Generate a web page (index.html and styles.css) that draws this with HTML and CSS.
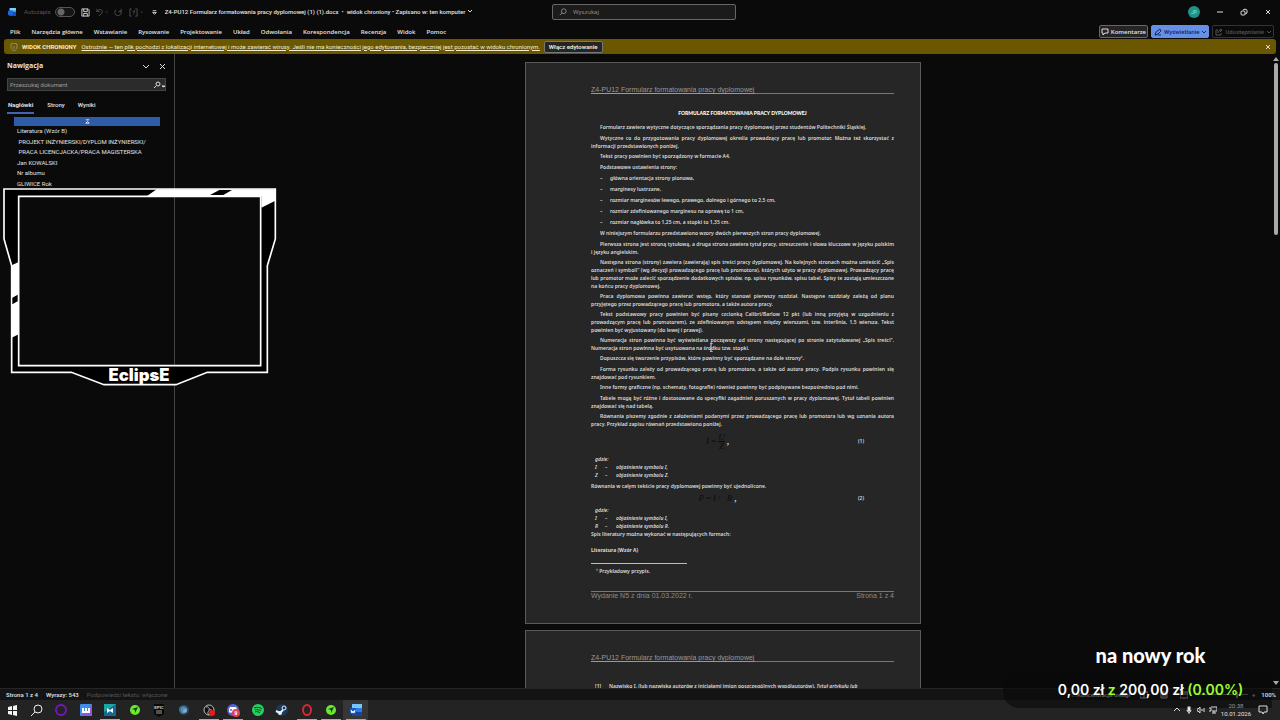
FILE: index.html
```html
<!DOCTYPE html>
<html lang="pl">
<head>
    <meta charset="UTF-8">
    <meta name="viewport" content="width=device-width, initial-scale=1.0">
    <title>Z4-PU12 Formularz formatowania pracy dyplomowej</title>
    <link rel="stylesheet" href="styles.css">
</head>
<body>
<div class="app">
    <header class="titlebar">
        <svg class="logo" viewBox="0 0 10 10"><rect x="2" y="0" width="8" height="10" rx="1" fill="#2f9be8"/><rect x="2" y="5" width="8" height="5" fill="#174fb5"/><rect x="2" y="0" width="8" height="3" rx="1" fill="#7bd3f5"/><rect y="3" width="6" height="6" rx="1" fill="#1c64d8"/></svg>
        <label class="autosave">Autozapis <input type="checkbox" disabled></label>
        <button class="icon" aria-label="Zapisz"><svg viewBox="0 0 10 10"><path d="M1 1h7l1 1v7H1zM3 1v3h4V1M3 9V6h4v3"/></svg></button>
        <button class="icon off" aria-label="Cofnij"><svg viewBox="0 0 14 10"><path d="M1 1v3h3M1 4c2-3 6-3 6 0 0 2-2 3-4 5M11 4l1 1 1-1"/></svg></button>
        <button class="icon off" aria-label="Ponów"><svg viewBox="0 0 10 10"><path d="M8 1v3H5M2 2c-3 4 1 8 4 6 2-1 3-3 1-5"/></svg></button>
        <button class="icon off" aria-label="Nawiasy"><svg viewBox="0 0 16 10"><path d="M3 1H1v8h2M7 1h2v8H7M4 4l2-1v2L5 6v1M13 4l1 1 1-1"/></svg></button>
        <button class="icon" aria-label="Dostosuj"><svg viewBox="0 0 10 10"><path d="M3 3h4M3 5h4L5 7z"/></svg></button>
        <h1>Z4-PU12 Formularz formatowania pracy dyplomowej (1) (1).docx &nbsp;•&nbsp; widok chroniony • Zapisano w: ten komputer <svg viewBox="0 0 6 6"><path d="M1 2l2 2 2-2"/></svg></h1>
        <label class="search">
            <svg viewBox="0 0 10 10"><circle cx="6" cy="4" r="3"/><path d="M4 6L1 9"/></svg>
            <input type="text" placeholder="Wyszukaj" aria-label="Wyszukaj">
        </label>
        <div class="window">
            <span class="avatar">JP</span>
            <button aria-label="Minimalizuj"><svg viewBox="0 0 8 8"><path d="M1 4h6"/></svg></button>
            <button aria-label="Przywróć"><svg viewBox="0 0 8 8"><rect x="1" y="3" width="4" height="4" rx="1"/><path d="M3 2c0-1 4-1 4 0v3L5 6"/></svg></button>
            <button aria-label="Zamknij"><svg viewBox="0 0 8 8"><path d="M2 2l4 4M6 2L2 6"/></svg></button>
        </div>
    </header>

    <nav class="ribbon">
        <ul>
            <li><a href="#">Plik</a></li>
            <li><a href="#">Narzędzia główne</a></li>
            <li><a href="#">Wstawianie</a></li>
            <li><a href="#">Rysowanie</a></li>
            <li><a href="#">Projektowanie</a></li>
            <li><a href="#">Układ</a></li>
            <li><a href="#">Odwołania</a></li>
            <li><a href="#">Korespondencja</a></li>
            <li><a href="#">Recenzja</a></li>
            <li><a href="#">Widok</a></li>
            <li><a href="#">Pomoc</a></li>
        </ul>
        <div class="actions">
            <button class="comments"><svg viewBox="0 0 8 8"><path d="M1 1h6v4H4L2 7V5H1z"/></svg>Komentarze</button>
            <button class="viewing"><svg viewBox="0 0 8 8"><path d="M1 7l1-3 4-3 1 2-3 3zM4 7h3M1 7h1"/></svg>Wyświetlanie<svg class="caret" viewBox="0 0 4 4"><path d="M0 1l2 2 2-2"/></svg></button>
            <button class="share"><svg viewBox="0 0 8 8"><path d="M3 2H1v5h5V5M3 5c0-2 1-3 4-3M5 1l2 1-2 2"/></svg>Udostępnianie<svg class="caret" viewBox="0 0 4 4"><path d="M0 1l2 2 2-2"/></svg></button>
        </div>
    </nav>

    <div class="warning">
        <svg class="shield" viewBox="0 0 8 8"><path d="M4 0l3 1v3c0 2-1 3-3 4-2-1-3-2-3-4V1zM4 3v3M4 2v0"/></svg>
        <strong>WIDOK CHRONIONY</strong>
        <a href="#">Ostrożnie — ten plik pochodzi z lokalizacji internetowej i może zawierać wirusy. Jeśli nie ma konieczności jego edytowania, bezpieczniej jest pozostać w widoku chronionym.</a>
        <button class="enable">Włącz edytowanie</button>
        <button class="close" aria-label="Zamknij"><svg viewBox="0 0 8 8"><path d="M2 2l4 4M6 2L2 6"/></svg></button>
    </div>

    <main>
        <aside class="panel">
            <div class="panel-head">
                <h2>Nawigacja</h2>
                <button aria-label="Opcje"><svg viewBox="0 0 8 8"><path d="M1 3l3 3 3-3"/></svg></button>
                <button aria-label="Zamknij"><svg viewBox="0 0 8 8"><path d="M2 2l5 5M7 2L2 7"/></svg></button>
            </div>
            <div class="find">
                <input type="text" placeholder="Przeszukaj dokument" aria-label="Przeszukaj dokument">
                <button aria-label="Szukaj"><svg viewBox="0 0 12 8"><circle cx="5" cy="3" r="2"/><path d="M3 5L1 7M9 5h3l-1 1z"/></svg></button>
            </div>
            <div class="tabs">
                <a href="#" class="active">Nagłówki</a>
                <a href="#">Strony</a>
                <a href="#">Wyniki</a>
            </div>
            <button class="to-top" aria-label="Początek"><svg viewBox="0 0 6 6"><path d="M1 1h4M1 5l2-2 2 2z"/></svg></button>
            <ul class="headings">
                <li>Literatura (Wzór B)</li>
                <li>&nbsp;PROJEKT INŻYNIERSKI/DYPLOM INŻYNIERSKI/</li>
                <li>&nbsp;PRACA LICENCJACKA/PRACA MAGISTERSKA</li>
                <li>Jan KOWALSKI</li>
                <li>Nr albumu</li>
                <li>GLIWICE Rok</li>
            </ul>
        </aside>

        <div class="document">
            <article class="page">
                <div class="page-header"><span>Z4-PU12 Formularz formatowania pracy dyplomowej</span></div>
                <h3>FORMULARZ FORMATOWANIA PRACY DYPLOMOWEJ</h3>
                <p>Formularz zawiera wytyczne dotyczące sporządzania pracy dyplomowej przez studentów Politechniki Śląskiej.</p>
                <p class="long">Wytyczne co do przygotowania pracy dyplomowej określa prowadzący pracę lub promotor. Można też skorzystać z informacji przedstawionych poniżej.</p>
                <p>Tekst pracy powinien być sporządzony w formacie A4.</p>
                <p>Podstawowe ustawienia strony:</p>
                <ul>
                    <li>główna orientacja strony pionowa,</li>
                    <li>marginesy lustrzane,</li>
                    <li>rozmiar marginesów lewego, prawego, dolnego i górnego to 2,5 cm,</li>
                    <li>rozmiar zdefiniowanego marginesu na oprawę to 1 cm,</li>
                    <li>rozmiar nagłówka to 1,25 cm, a stopki to 1,35 cm.</li>
                </ul>
                <p>W niniejszym formularzu przedstawiono wzory dwóch pierwszych stron pracy dyplomowej.</p>
                <p class="long">Pierwsza strona jest stroną tytułową, a druga strona zawiera tytuł pracy, streszczenie i słowa kluczowe w języku polskim i&nbsp;języku angielskim.</p>
                <p class="long">Następna strona (strony) zawiera (zawierają) spis treści pracy dyplomowej. Na kolejnych stronach można umieścić „Spis oznaczeń i symboli” (wg decyzji prowadzącego pracę lub promotora), których użyto w pracy dyplomowej. Prowadzący pracę lub&nbsp;promotor może zalecić sporządzenie dodatkowych spisów, np. spisu rysunków, spisu tabel. Spisy te zostają umieszczone na&nbsp;końcu pracy dyplomowej.</p>
                <p class="long">Praca dyplomowa powinna zawierać wstęp, który stanowi pierwszy rozdział. Następne rozdziały zależą od planu przyjętego przez&nbsp;prowadzącego pracę lub promotora, a także autora pracy.</p>
                <p class="long">Tekst podstawowy pracy powinien być pisany czcionką Calibri/Barlow 12 pkt (lub inną przyjętą w uzgodnieniu z prowadzącym pracę lub promotorem), ze zdefiniowanym odstępem między wierszami, tzw. interlinia, 1,5 wiersza. Tekst powinien być wyjustowany (do lewej i prawej).</p>
                <p class="long">Numeracja stron powinna być wyświetlana począwszy od strony następującej po stronie zatytułowanej „Spis treści”. Numeracja stron powinna być usytuowana na środku tzw. stopki.</p>
                <p>Dopuszcza się tworzenie przypisów, które powinny być sporządzane na dole strony¹.</p>
                <p class="long">Forma rysunku zależy od prowadzącego pracę lub promotora, a także od autora pracy. Podpis rysunku powinien się znajdować pod rysunkiem.</p>
                <p>Inne formy graficzne (np. schematy, fotografie) również powinny być podpisywane bezpośrednio pod nimi.</p>
                <p class="long">Tabele mogą być różne i dostosowane do specyfiki zagadnień poruszanych w pracy dyplomowej. Tytuł tabeli powinien znajdować się nad tabelą.</p>
                <p class="long">Równania piszemy zgodnie z założeniami podanymi przez prowadzącego pracę lub promotora lub wg uznania autora pracy. Przykład zapisu równań przedstawiono poniżej.</p>
                <div class="equation">
                    <div class="formula"><i>I</i> = <span class="fraction"><i>U</i><i>Z</i></span><b>,</b></div>
                    <span>(1)</span>
                </div>
                <dl>
                    <dt>gdzie:</dt>
                    <dd><span>I</span><span>–</span>objaśnienie symbolu I,</dd>
                    <dd><span>Z</span><span>–</span>objaśnienie symbolu Z.</dd>
                </dl>
                <p class="flush">Równania w całym tekście pracy dyplomowej powinny być ujednolicone.</p>
                <div class="equation second">
                    <div class="formula"><i>P</i> = <i>I</i><sup>2</sup> &nbsp;<i>R</i><b>,</b></div>
                    <span>(2)</span>
                </div>
                <dl class="second">
                    <dt>gdzie:</dt>
                    <dd><span>I</span><span>–</span>objaśnienie symbolu I,</dd>
                    <dd><span>R</span><span>–</span>objaśnienie symbolu R.</dd>
                </dl>
                <p class="flush last">Spis literatury można wykonać w następujących formach:</p>
                <h4>Literatura (Wzór A)</h4>
                <div class="footnote">¹ Przykładowy przypis.</div>
                <footer><span>Wydanie N5 z dnia 01.03.2022 r.</span><span>Strona 1 z 4</span></footer>
            </article>
            <article class="page">
                <div class="page-header"><span>Z4-PU12 Formularz formatowania pracy dyplomowej</span></div>
                <div class="reference"><span>[1]</span><div>Nazwisko I. (lub nazwiska autorów z inicjałami imion poszczególnych współautorów), <i>Tytuł artykułu lub</i></div></div>
            </article>
        </div>

        <div class="scrollbar">
            <svg viewBox="0 0 6 4"><path d="M3 0l3 4H0z"/></svg>
            <div class="track"><div class="thumb"></div></div>
            <svg viewBox="0 0 6 4"><path d="M0 0h6L3 4z"/></svg>
        </div>
    </main>

    <div class="status">
        <span>Strona 1 z 4</span>
        <span>Wyrazy: 543</span>
        <span class="hint">Podpowiedzi tekstu: włączone</span>
        <div class="view">
            <span>⛶ Koncentracja uwagi</span>
            <svg viewBox="0 0 8 8"><path d="M0 1h8v6H0zM4 1v6"/></svg>
            <svg viewBox="0 0 8 8"><path d="M1 1h6v6H1zM2 3h4M2 5h4"/></svg>
            <svg viewBox="0 0 8 8"><path d="M0 1h8v6H0zM0 3h8"/></svg>
            <input type="range" value="80" aria-label="Powiększenie">
            <span class="plus">+</span>
            <span class="zoom">100%</span>
        </div>
    </div>

    <div class="taskbar">
        <div class="apps">
            <button aria-label="Start"><svg viewBox="0 0 14 14"><path fill="#f4f4f4" d="M3 4l4-1v4H3zM8 3l4-1v5H8zM3 8h4v4l-4-1zM8 8h4v5l-4-1z"/></svg></button>
            <button aria-label="Szukaj"><svg viewBox="0 0 14 14"><circle cx="8" cy="6" r="4" fill="none" stroke="#eee"/><path d="M5 9l-4 4" stroke="#eee"/></svg></button>
            <button aria-label="Opera GX"><svg viewBox="0 0 14 14"><circle cx="7" cy="7" r="5" fill="none" stroke="#7417b8" stroke-width="2"/></svg></button>
            <button aria-label="Wattpad"><svg viewBox="0 0 14 14"><rect x="1" y="1" width="12" height="12" rx="1" fill="#3d8fe8"/><path d="M1 13L13 1v12z" fill="#8a5ae0"/><path d="M4 5v4h6V5M7 5v4" fill="none" stroke="#fff" stroke-width="2"/></svg></button>
            <button class="open" aria-label="Medal"><svg viewBox="0 0 14 14"><rect x="1" y="1" width="12" height="12" fill="#136a96"/><path d="M1 1h12L1 9z" fill="#1ba6a1"/><path d="M4 5l3 2 3-2v5L7 8l-3 2z" fill="#fff"/></svg></button>
            <button aria-label="Nawigator"><svg viewBox="0 0 14 14"><circle cx="7" cy="7" r="5" fill="#6ae834"/><path d="M4 6l6-2-3 6V7z" fill="#193d14"/></svg></button>
            <button aria-label="Epic Games"><svg viewBox="0 0 14 14"><path d="M2 1h10v10l-5 3-5-3z" fill="#080808"/><text x="7" y="6" class="epic">EPIC</text><path d="M4 8h6M4 10h6" stroke="#999"/></svg></button>
            <button aria-label="Przeglądarka"><svg viewBox="0 0 14 14"><circle cx="7" cy="7" r="5" fill="#264c6b"/><circle cx="7" cy="7" r="3" fill="#8caec5"/><path d="M2 5c3-4 7-2 9 2-4-2-6 0-4 4-3 0-5-2-5-6" fill="#4281ab" opacity=".7"/></svg></button>
            <button class="open" aria-label="OBS"><svg viewBox="0 0 14 14"><circle cx="7" cy="7" r="5" fill="#111" stroke="#bbb"/><path d="M4 4c4-1 3 4 6 3M7 12c-3-3 1-4 0-6" fill="none" stroke="#bbb"/><circle cx="10" cy="10" r="3" fill="#ee1818"/></svg></button>
            <button class="open" aria-label="Discord"><svg viewBox="0 0 14 14"><circle cx="7" cy="7" r="6" fill="#5961d0"/><path d="M3 9c0-6 1-5 4-5s4-1 4 5L9 10 8 9H6l-1 1z" fill="#fff"/><circle cx="5" cy="7" r="1" fill="#5961d0"/><circle cx="10" cy="10" r="4" fill="#df4052"/><text x="10" y="12" class="badge">9</text></svg></button>
            <button aria-label="Spotify"><svg viewBox="0 0 14 14"><circle cx="7" cy="7" r="6" fill="#24d160"/><path d="M3 5c3-1 6-1 8 1M4 7c2-1 5 0 6 1M4 9c2-1 4 0 5 1" fill="none" stroke="#123b20"/></svg></button>
            <button aria-label="Steam"><svg viewBox="0 0 14 14"><circle cx="7" cy="7" r="6" fill="#173a5c"/><circle cx="9" cy="5" r="2" fill="none" stroke="#eee"/><path d="M1 8l4 2 3-3" fill="none" stroke="#eee" stroke-width="2"/><circle cx="5" cy="10" r="2" fill="#eee"/></svg></button>
            <button class="open" aria-label="Opera"><svg viewBox="0 0 14 14"><ellipse cx="7" cy="7" rx="4" ry="5" fill="none" stroke="#d52938" stroke-width="2"/></svg></button>
            <button class="open" aria-label="Nawigator"><svg viewBox="0 0 14 14"><circle cx="7" cy="7" r="5" fill="#6ae834"/><path d="M4 6l6-2-3 6V7z" fill="#193d14"/></svg></button>
            <button class="open current" aria-label="Word"><svg viewBox="0 0 14 14"><rect x="3" y="1" width="10" height="12" rx="1" fill="#2d7be3"/><path d="M3 1h10v4H3z" fill="#75c5f7"/><path d="M3 9h10v4H3z" fill="#1745a6"/><rect x="1" y="5" width="6" height="6" fill="#1759c4"/><path d="M2 7l1 3 1-2 1 2 1-3" fill="none" stroke="#fff"/></svg></button>
        </div>
        <div class="tray">
            <svg viewBox="0 0 8 8"><path d="M1 5l3-3 3 3"/></svg>
            <svg viewBox="0 0 8 8"><rect x="3" y="1" width="2" height="4" fill="#eee"/><path d="M2 4c0 3 4 3 4 0M4 6v2"/></svg>
            <svg viewBox="0 0 8 8"><path d="M0 3h1l2-2v6L1 5H0zM5 3v2M7 2v4"/></svg>
            <svg viewBox="0 0 8 8"><path d="M2 1h6v4H3M5 5v2M3 7h4M0 2h2v3H0"/></svg>
            <time><span>20:38</span><br>10.01.2026</time>
            <svg class="note" viewBox="0 0 10 10"><path d="M1 1h8v6H6L5 9 4 7H1z"/></svg>
        </div>
    </div>
</div>

<!-- text cursor -->
<svg class="cursor" viewBox="0 0 5 9"><path d="M1 0h3M1 9h3M2 0v9"/></svg>

<!-- camera frame -->
<svg class="camera" viewBox="0 0 840 615">
    <path d="M12 12H826V162L802 242V562H622L528 599H312L214 562H35V242L12 162zM56 34V542H782V34z" fill="#000" fill-rule="evenodd" stroke="#fff" stroke-width="5"/>
    <path d="M440 34L470 13H826V47L784 68V34zM35 241L56 231V448L35 458z" fill="#fff"/>
    <path d="M630 30l28-15h38l-26 15zM37 338l16-9v20l-16 9z" fill="#000"/>
    <text x="417" y="588">EclipsE</text>
</svg>

<!-- donation goal -->
<div class="goal">
    <div class="goal-title">na nowy rok</div>
    <div class="goal-sum">0,00 zł <em>z</em> 200,00 zł <em>(0.00%)</em></div>
</div>
</body>
</html>
```
FILE: styles.css
```css
* {
    box-sizing: border-box;
}
body {
    margin: 0;
    background: #0a0a0a;
    color: #e2e2e2;
    font-family: Roboto, sans-serif;
    font-size: 6px;
    line-height: 8px;
    overflow: hidden;
}
h1, h2, h3, h4, p, ul, dl, dd {
    margin: 0;
    padding: 0;
    font-size: inherit;
}
ul {
    list-style: none;
}
a {
    color: inherit;
    text-decoration: none;
}
button {
    display: flex;
    align-items: center;
    justify-content: center;
    padding: 0;
    border: 0;
    background: none;
    color: inherit;
    font: inherit;
}
input {
    min-width: 0;
    color: inherit;
    font: inherit;
}
input::placeholder {
    color: #999;
    opacity: 1;
}
svg {
    flex: none;
    width: 8px;
    height: 8px;
    fill: none;
    stroke: #ddd;
}
.app {
    display: flex;
    flex-direction: column;
    height: 100vh;
}

/* title bar */
.titlebar {
    display: flex;
    align-items: center;
    flex: none;
    height: 24px;
    padding: 0 4px 0 8px;
    position: relative;
}
.titlebar .logo {
    stroke: none;
    margin-right: 8px;
}
.autosave {
    display: flex;
    align-items: center;
    gap: 4px;
    color: #555;
    margin-right: 6px;
}
.autosave input {
    appearance: none;
    width: 20px;
    height: 10px;
    margin: 0;
    border: 1px solid #555;
    border-radius: 5px;
    background: radial-gradient(circle at 5px 4px, #666 3px, #151515 4px);
}
.icon {
    margin-right: 6px;
}
.icon svg {
    width: auto;
    height: 9px;
}
.icon.off svg {
    stroke: #555;
}
.titlebar h1 {
    font-weight: 500;
    white-space: nowrap;
}
.titlebar h1 svg {
    width: 6px;
    height: 6px;
}
.search {
    position: absolute;
    left: 50%;
    margin-left: -88px;
    display: flex;
    align-items: center;
    width: 184px;
    height: 16px;
    padding: 0 6px;
    gap: 4px;
    border: 1px solid #666;
    border-radius: 2px;
    background: #1b1b1b;
    font-family: "Open Sans", sans-serif;
}
.search svg {
    stroke: #999;
}
.search input {
    flex: 1;
    border: 0;
    background: none;
}
.window {
    display: flex;
    align-items: center;
    gap: 16px;
    margin-left: auto;
    padding-right: 4px;
}
.avatar {
    width: 12px;
    height: 12px;
    border-radius: 50%;
    background: #1d9485;
    color: #a5ded6;
    font-size: 5px;
    line-height: 12px;
    text-align: center;
}

/* ribbon */
.ribbon {
    display: flex;
    align-items: center;
    justify-content: space-between;
    flex: none;
    height: 15px;
    padding: 0 6px 0 10px;
}
.ribbon ul {
    display: flex;
    gap: 11px;
    font-family: "Open Sans", sans-serif;
    font-weight: 600;
}
.actions {
    display: flex;
    gap: 3px;
    font-weight: 500;
}
.actions button {
    height: 13px;
    padding: 0 2px;
    gap: 2px;
    border: 1px solid #666;
    border-radius: 2px;
}
.actions .caret {
    width: 4px;
    height: 4px;
    margin-left: 1px;
}
.actions .comments {
    padding: 0 1px;
    background: #252525;
    font-family: "Open Sans", sans-serif;
    font-weight: 600;
}
.actions .viewing {
    border-color: #668fe8;
    background: #668fe8;
    color: #152b5c;
}
.actions .viewing svg {
    stroke: #152b5c;
}
.actions .share {
    border-color: #333;
    color: #555;
}
.actions .share svg {
    stroke: #555;
}

/* protected view bar */
.warning {
    display: flex;
    align-items: center;
    flex: none;
    height: 15px;
    margin: 0 4px;
    padding: 0 4px 0 6px;
    border-radius: 3px;
    background: #6a5700;
    color: #f2ecd5;
    white-space: nowrap;
}
.warning .shield {
    margin-right: 4px;
    stroke: #8b9075;
}
.warning a {
    margin: 0 4px 0 5px;
    text-decoration: underline;
}
.warning .enable {
    height: 12px;
    padding: 0 4px;
    border: 1px solid #777;
    border-radius: 2px;
    background: #252525;
    font-weight: 600;
}
.warning .close {
    margin-left: auto;
}

main {
    display: flex;
    flex: 1;
    min-height: 0;
}

/* navigation pane */
.panel {
    width: 175px;
    padding: 7px 8px 0 7px;
    border-right: 1px solid #444;
    font-weight: 500;
}
.panel-head {
    display: flex;
    align-items: center;
    gap: 8px;
    height: 10px;
}
.panel-head h2 {
    flex: 1;
    font-family: "Open Sans", sans-serif;
    font-size: 7px;
    font-weight: 700;
}
.find {
    display: flex;
    height: 13px;
    margin-top: 7px;
    border: 1px solid #444;
    background: #2b2b2b;
}
.find input {
    flex: 1;
    padding: 0 2px;
    border: 0;
    background: none;
    font-weight: 400;
}
.find svg {
    width: 12px;
}
.tabs {
    display: flex;
    gap: 13px;
    margin-top: 7px;
}
.tabs a {
    height: 16px;
    padding: 3px 0;
}
.tabs .active {
    border-bottom: 2px solid #4265b0;
    padding: 3px 1px;
    font-weight: 700;
}
.to-top {
    width: 146px;
    height: 9px;
    margin: 3px 0 0 7px;
    background: #2f5ca8;
}
.to-top svg {
    width: 5px;
    height: 5px;
    stroke: #fff;
}
.headings {
    display: grid;
    height: 63px;
    padding-left: 10px;
    align-items: center;
    font-weight: 400;
    white-space: nowrap;
}

/* document */
.document {
    display: flex;
    flex: 1;
    flex-direction: column;
    align-items: center;
    gap: 6px;
    padding-top: 8px;
    overflow: hidden;
}
.page {
    flex: none;
    width: 396px;
    padding: 22px 26px 23px 65px;
    border: 1px solid #5a5a5a;
    background: #262626;
    color: #dcdcdc;
    font-family: "Noto Sans", sans-serif;
    font-size: 5px;
    font-weight: 600;
    line-height: 8px;
}
.page-header {
    display: flex;
    align-items: flex-end;
    height: 9px;
    margin-bottom: 15px;
    border-bottom: 1px solid #777;
    color: #999;
    font-family: "Liberation Sans", sans-serif;
    font-size: 7px;
    font-weight: 400;
    line-height: 6px;
    text-decoration: underline;
}
.page h3 {
    margin-bottom: 6px;
    color: #fff;
    font-family: Lato, sans-serif;
    font-weight: 900;
    text-align: center;
}
.page p {
    margin-bottom: 3px;
    text-align: justify;
    text-indent: 9px;
}
.page .long {
    margin-bottom: 2px;
}
.page .flush {
    text-indent: 0;
}
.page li {
    display: flex;
    margin-bottom: 3px;
    padding-left: 9px;
}
.page li::before {
    content: "–";
    width: 10px;
}
.equation {
    display: grid;
    grid-template-columns: 1fr 36px;
    align-items: center;
    height: 22px;
    margin-top: 1px;
}
.formula {
    display: flex;
    align-items: center;
    justify-content: center;
    gap: 2px;
    margin-right: 14px;
    color: #0c0c0c;
    font-family: "Liberation Serif", serif;
    font-size: 9px;
    font-weight: 400;
}
.formula b {
    color: #ddd;
}
.formula sup {
    font-size: 5px;
}
.fraction {
    display: flex;
    flex-direction: column;
    text-align: center;
}
.fraction i:first-child {
    border-bottom: 1px solid #0c0c0c;
}
.page dl {
    margin: 3px 0;
    padding-left: 4px;
    font-style: italic;
}
.page dd {
    display: grid;
    grid-template-columns: 10px 11px 1fr;
}
.page .equation.second {
    height: 10px;
    margin: 0;
}
.page dl.second {
    margin: 3px 0 0;
}
.page .last {
    margin-bottom: 8px;
}
.footnote {
    margin-top: 9px;
    padding-left: 5px;
}
.footnote::before {
    content: "";
    display: block;
    width: 96px;
    margin: 0 0 3px -5px;
    border-top: 1px solid #bbb;
}
.page footer {
    display: flex;
    justify-content: space-between;
    margin-top: 16px;
    border-top: 1px solid #777;
    color: #8c8c8c;
    font-family: "Liberation Sans", sans-serif;
    font-size: 7px;
    font-weight: 400;
}
.reference {
    display: grid;
    grid-template-columns: 14px 1fr;
    padding: 5px 20px 0 4px;
    text-align: justify;
}
.scrollbar {
    display: flex;
    flex-direction: column;
    align-items: center;
    width: 9px;
    padding: 3px 0;
    gap: 2px;
}
.scrollbar svg {
    width: 6px;
    height: 4px;
    fill: #aaa;
    stroke: none;
}
.track {
    flex: 1;
}
.thumb {
    width: 4px;
    height: 28%;
    border-radius: 2px;
    background: #aaa;
}

/* status bar */
.status {
    display: flex;
    align-items: center;
    flex: none;
    height: 12px;
    padding: 0 4px 0 6px;
    gap: 8px;
    border-top: 1px solid #262626;
    background: #141414;
    font-weight: 500;
}
.status .hint {
    color: #555;
    font-weight: 400;
}
.view {
    display: flex;
    align-items: center;
    gap: 8px;
    margin-left: auto;
}
.view svg {
    margin: 0 2px;
}
.view input {
    appearance: none;
    width: 50px;
    height: 1px;
    margin: 0;
    background: #888;
}
.view input::-webkit-slider-thumb {
    appearance: none;
    width: 2px;
    height: 6px;
    background: #aaa;
}
.plus {
    margin-left: -4px;
}
.zoom {
    position: relative;
    z-index: 1;
    margin-left: -2px;
}

/* taskbar */
.taskbar {
    display: flex;
    justify-content: space-between;
    flex: none;
    height: 20px;
    background: #232323;
}
.apps {
    display: grid;
    grid-template-columns: repeat(15, 1fr);
    width: 368px;
}
.apps svg {
    width: 14px;
    height: 14px;
    stroke: none;
}
.apps .open {
    background: linear-gradient(#aaa, #aaa) center bottom / 20px 1px no-repeat;
}
.apps .current {
    background-color: #363636;
}
.epic {
    fill: #ddd;
    font: 700 4px "Liberation Sans", sans-serif;
    text-anchor: middle;
}
.badge {
    fill: #fff;
    font: 700 5px "Liberation Sans", sans-serif;
    text-anchor: middle;
}
.tray {
    display: flex;
    align-items: center;
    gap: 4px;
    padding-right: 12px;
    position: relative;
    z-index: 1;
    text-align: center;
}
.tray time {
    margin-right: 3px;
}
.tray time span {
    color: #999;
}
.tray .note {
    width: 10px;
    height: 10px;
}

/* overlays */
.cursor {
    position: absolute;
    left: 709px;
    top: 343px;
    width: 5px;
    height: 9px;
}
.camera {
    position: absolute;
    left: 0;
    top: 185px;
    width: 280px;
    height: 205px;
    stroke: none;
}
.camera text {
    fill: #fff;
    font: 900 50px Inter, sans-serif;
    text-anchor: middle;
}
.goal {
    position: absolute;
    right: 8px;
    bottom: 12px;
    width: 269px;
    padding: 0 0 10px 26px;
    border-radius: 0 0 0 16px;
    background: linear-gradient(transparent 40%, rgba(8, 8, 8, 0.6) 60%);
    color: #fff;
    text-align: center;
}
.goal-title {
    font-family: Lato, sans-serif;
    font-size: 20px;
    font-weight: 900;
    line-height: 26px;
    margin-bottom: 14px;
}
.goal-sum {
    font-family: Inter, sans-serif;
    font-size: 14px;
    font-weight: 600;
    line-height: 16px;
    white-space: nowrap;
}
.goal em {
    color: #9cff2e;
    font-style: normal;
}
```
